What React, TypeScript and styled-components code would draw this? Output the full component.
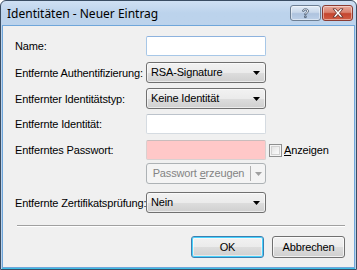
import React from "react";
import styled, { createGlobalStyle } from "styled-components";

const Global = createGlobalStyle`
  html, body { margin: 0; padding: 0; background: #ffffff; }
  body { width: 357px; height: 270px; overflow: hidden; }
`;

const Window = styled.div`
  box-sizing: border-box;
  width: 357px;
  height: 270px;
  border: 1px solid #3a4d63;
  border-radius: 6px 6px 0 0;
  background: linear-gradient(#cfe0f3 0px, #bcd3ec 12px, #b9d1ea 100%);
  display: flex;
  flex-direction: column;
`;

const TitleBar = styled.div`
  height: 25px;
  flex: none;
  display: flex;
  align-items: center;
  padding: 0 3px 0 6px;
`;

const Title = styled.div`
  flex: 1;
  font-family: "Noto Sans", "Open Sans", sans-serif;
  font-size: 12px;
  color: #000;
  padding-bottom: 1px;
`;

const CaptionButtons = styled.div`
  display: flex;
  gap: 1px;
  align-self: flex-start;
  margin-top: 4px;
`;

const CaptionButton = styled.div<{ $close?: boolean }>`
  width: 31px;
  height: 16px;
  box-sizing: border-box;
  border: 1px solid ${(p) => (p.$close ? "#8a3b32" : "#6d7f94")};
  border-radius: 3px;
  background: ${(p) =>
    p.$close
      ? "linear-gradient(#e9a99c 0%, #d9826f 45%, #c4452f 55%, #d25d43 100%)"
      : "linear-gradient(#e4edf7 0%, #c8d7ea 45%, #aec3de 55%, #bdd0e8 100%)"};
  box-shadow: inset 0 0 0 1px rgba(255, 255, 255, 0.45);
  display: flex;
  align-items: center;
  justify-content: center;
`;

const Client = styled.div`
  flex: 1;
  margin: 0 2px 2px 2px;
  background: #f0f0f0;
  box-shadow: 0 0 0 1px #6fa6da, 0 1px 0 1px #3cbde6;
  display: flex;
  flex-direction: column;
  padding: 10px 9px 0 12px;
  font-family: "Liberation Sans", Arial, sans-serif;
  font-size: 11px;
  letter-spacing: -0.15px;
  color: #000;
`;

const Row = styled.div<{ $gap: number }>`
  display: grid;
  grid-template-columns: 131px 120px auto;
  align-items: center;
  height: 20px;
  margin-top: ${(p) => p.$gap}px;
`;

const Label = styled.div`
  white-space: nowrap;
`;

const TextBox = styled.div<{ $tone?: "focus" | "plain" | "error" }>`
  box-sizing: border-box;
  width: 120px;
  height: 20px;
  background: ${(p) => (p.$tone === "error" ? "#ffc8c8" : "#ffffff")};
  border: 1px solid
    ${(p) =>
      p.$tone === "focus" ? "#a7c7e7" : p.$tone === "error" ? "#d9d0d0" : "#d5dbe1"};
  border-top-color: ${(p) =>
    p.$tone === "focus" ? "#8db2de" : p.$tone === "error" ? "#c9bcbc" : "#bcc3cb"};
  border-radius: 2px;
`;

const Select = styled.div`
  box-sizing: border-box;
  width: 120px;
  height: 21px;
  border: 1px solid #707070;
  border-radius: 3px;
  background: linear-gradient(#f2f2f2 0%, #ebebeb 50%, #dddddd 51%, #cfcfcf 100%);
  box-shadow: inset 0 0 0 1px rgba(255, 255, 255, 0.6);
  display: flex;
  align-items: center;
  padding: 0 5px 0 4px;
`;

const SelectText = styled.span`
  flex: 1;
  padding-bottom: 1px;
`;

const Arrow = ({ color = "#000" }: { color?: string }) => (
  <svg width="7" height="4" viewBox="0 0 7 4">
    <path d="M0 0H7L3.5 4Z" fill={color} />
  </svg>
);

const SplitButton = styled.div`
  box-sizing: border-box;
  width: 120px;
  height: 21px;
  border: 1px solid #adb2b5;
  border-radius: 3px;
  background: #f4f4f4;
  color: #838383;
  display: flex;
  align-items: center;
`;

const SplitMain = styled.span`
  width: 103px;
  text-align: center;
  padding-bottom: 1px;
`;

const SplitDivider = styled.span`
  width: 1px;
  height: 15px;
  background: #b0b0b0;
`;

const SplitArrow = styled.span`
  flex: 1;
  display: flex;
  justify-content: center;
`;

const U = styled.span`
  text-decoration: underline;
  text-underline-offset: 1px;
`;

const CheckWrap = styled.label`
  display: flex;
  align-items: center;
  gap: 2px;
  margin-left: 3px;
`;

const CheckBox = styled.span`
  box-sizing: border-box;
  width: 13px;
  height: 13px;
  border: 1px solid #8e8f8f;
  background: linear-gradient(135deg, #dcdcdc 0%, #f4f4f4 60%, #ffffff 100%);
  box-shadow: inset 0 0 0 1px #f4f4f4, inset 0 0 0 2px #d2d2d2;
`;

const Separator = styled.div`
  margin: 13px 0 0 2px;
  height: 1px;
  background: #a0a0a0;
  border-bottom: 1px solid #ffffff;
`;

const Buttons = styled.div`
  display: flex;
  justify-content: flex-end;
  gap: 8px;
  margin-top: 9px;
`;

const Button = styled.div<{ $default?: boolean }>`
  box-sizing: border-box;
  width: 73px;
  height: 22px;
  border: 1px solid ${(p) => (p.$default ? "#3c7fb1" : "#707070")};
  border-radius: 3px;
  background: linear-gradient(#f2f2f2 0%, #ebebeb 50%, #dddddd 51%, #cfcfcf 100%);
  box-shadow: ${(p) =>
    p.$default
      ? "inset 0 0 0 1px #48d2fd, inset 0 0 0 2px rgba(255,255,255,0.5)"
      : "inset 0 0 0 1px rgba(255,255,255,0.7)"};
  display: flex;
  align-items: center;
  justify-content: center;
  padding-bottom: 1px;
`;

export default function App() {
  return (
    <>
      <Global />
      <Window>
        <TitleBar>
          <Title>Identitäten - Neuer Eintrag</Title>
          <CaptionButtons>
            <CaptionButton>
              <svg width="9" height="11" viewBox="0 0 9 11">
                <path
                  d="M1.5 3.2C1.5 1.6 2.8 0.8 4.5 0.8C6.3 0.8 7.5 1.7 7.5 3.1C7.5 4.4 6.6 4.9 5.8 5.4C5.2 5.8 5.1 6 5.1 6.8H3.7C3.7 5.6 4 5.1 4.9 4.5C5.6 4 5.9 3.7 5.9 3.1C5.9 2.5 5.4 2.1 4.5 2.1C3.6 2.1 3.1 2.6 3.1 3.3Z M3.6 8H5.2V9.6H3.6Z"
                  fill="#ffffff"
                  stroke="#3b4e66"
                  strokeWidth="0.8"
                />
              </svg>
            </CaptionButton>
            <CaptionButton $close>
              <svg width="12" height="10" viewBox="0 0 12 10">
                <path
                  d="M1 0.8H3.8L6 3.4L8.2 0.8H11L7.5 5L11 9.2H8.2L6 6.6L3.8 9.2H1L4.5 5Z"
                  fill="#ffffff"
                  stroke="#5a2a24"
                  strokeWidth="0.8"
                />
              </svg>
            </CaptionButton>
          </CaptionButtons>
        </TitleBar>
        <Client>
          <Row $gap={0}>
            <Label>Name:</Label>
            <TextBox $tone="focus" />
          </Row>
          <Row $gap={6}>
            <Label>Entfernte Authentifizierung:</Label>
            <Select>
              <SelectText>RSA-Signature</SelectText>
              <Arrow />
            </Select>
          </Row>
          <Row $gap={6}>
            <Label>Entfernter Identitätstyp:</Label>
            <Select>
              <SelectText>Keine Identität</SelectText>
              <Arrow />
            </Select>
          </Row>
          <Row $gap={6}>
            <Label>Entfernte Identität:</Label>
            <TextBox $tone="plain" />
          </Row>
          <Row $gap={6}>
            <Label>Entferntes Passwort:</Label>
            <TextBox $tone="error" />
            <CheckWrap>
              <CheckBox />
              <span>
                <U>A</U>nzeigen
              </span>
            </CheckWrap>
          </Row>
          <Row $gap={3}>
            <Label />
            <SplitButton>
              <SplitMain>
                Passwort <U>e</U>rzeugen
              </SplitMain>
              <SplitDivider />
              <SplitArrow>
                <Arrow color="#a0a0a0" />
              </SplitArrow>
            </SplitButton>
          </Row>
          <Row $gap={9}>
            <Label>Entfernte Zertifikatsprüfung:</Label>
            <Select>
              <SelectText>Nein</SelectText>
              <Arrow />
            </Select>
          </Row>
          <Separator />
          <Buttons>
            <Button $default>OK</Button>
            <Button>Abbrechen</Button>
          </Buttons>
        </Client>
      </Window>
    </>
  );
}
